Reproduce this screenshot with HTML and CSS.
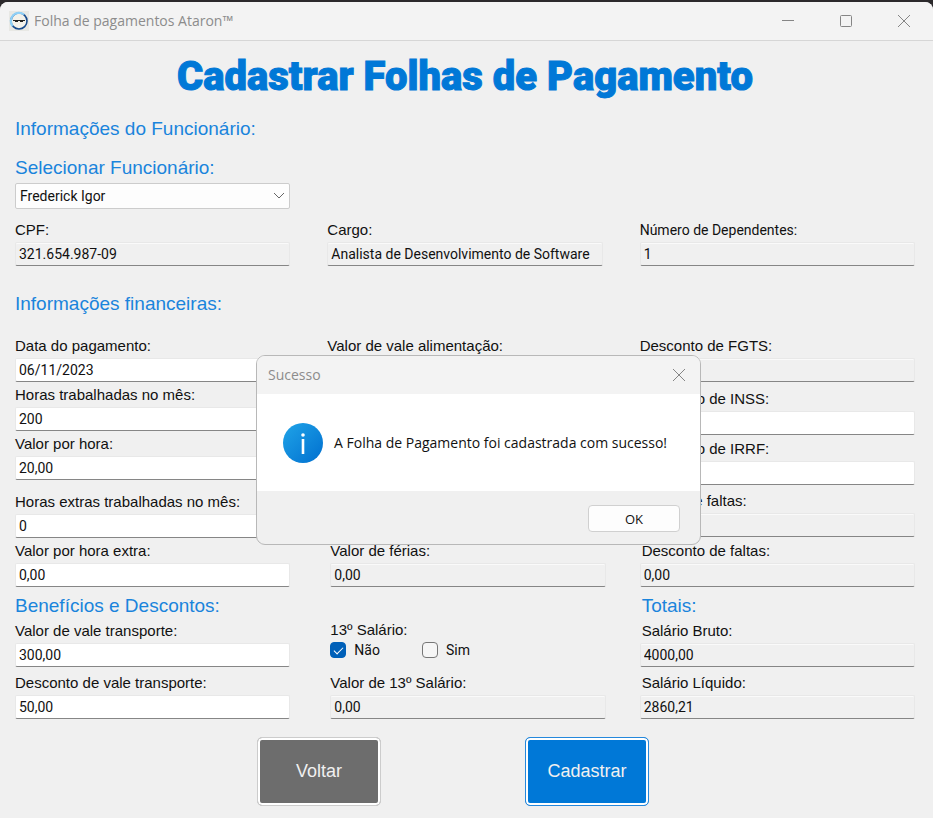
FILE: index.html
```html
<!DOCTYPE html>
<html lang="pt-BR">
<head>
<meta charset="utf-8">
<title>Folha de pagamentos Ataron™</title>
<link rel="stylesheet" href="styles.css">
</head>
<body>
<div class="window">
  <header class="titlebar">
    <svg class="app-icon" viewBox="0 0 20 20" aria-hidden="true">
      <rect width="20" height="20" fill="#e8e8e4"/>
      <circle cx="10" cy="10" r="8" fill="#f3f1ea" stroke="#164a8c" stroke-width="1.600"/>
      <path d="M3.500 15A8.200 8.200 0 0 1 15 3.500" fill="none" stroke="#8fd0f7" stroke-width="2.200"/>
      <path d="M4 9.500h12M6 10.500h3M11 10.500h3" stroke="#222"/>
    </svg>
    <span class="app-title">Folha de pagamentos Ataron™</span>
    <div class="caption-buttons">
      <button type="button" aria-label="Minimizar"><svg viewBox="0 0 14 14"><path d="M1 6.500h12"/></svg></button>
      <button type="button" aria-label="Maximizar"><svg viewBox="0 0 14 14"><rect x="1.500" y="1.500" width="11" height="11" rx="1"/></svg></button>
      <button type="button" aria-label="Fechar"><svg viewBox="0 0 14 14"><path d="M1 1l12 12M13 1L1 13"/></svg></button>
    </div>
  </header>

  <main class="content">
    <h1>Cadastrar Folhas de Pagamento</h1>
    <form>
      <h2>Informações do Funcionário:</h2>
      <div class="columns picker">
        <div class="column">
          <label class="heading-label" for="funcionario">Selecionar Funcionário:</label>
          <div class="select-wrap">
            <select id="funcionario"><option>Frederick Igor</option></select>
            <svg viewBox="0 0 12 8" aria-hidden="true"><path d="M1 1l5 5 5-5"/></svg>
          </div>
        </div>
      </div>
      <div class="columns employee">
        <div class="field"><label for="cpf">CPF:</label><input id="cpf" value="321.654.987-09" readonly></div>
        <div class="field"><label for="cargo">Cargo:</label><input id="cargo" value="Analista de Desenvolvimento de Software" readonly></div>
        <div class="field small-label"><label for="dependentes">Número de Dependentes:</label><input id="dependentes" value="1" readonly></div>
      </div>

      <h2 class="finance-title">Informações financeiras:</h2>
      <div class="columns finance">
        <div class="column">
          <div class="field"><label for="data">Data do pagamento:</label><input id="data" value="06/11/2023"></div>
          <div class="field"><label for="horas">Horas trabalhadas no mês:</label><input id="horas" value="200"></div>
          <div class="field"><label for="valor-hora">Valor por hora:</label><input id="valor-hora" value="20,00"></div>
          <div class="field far"><label for="extras">Horas extras trabalhadas no mês:</label><input id="extras" value="0"></div>
          <div class="field"><label for="valor-extra">Valor por hora extra:</label><input id="valor-extra" value="0,00"></div>
        </div>
        <div class="column spread">
          <div class="field"><label for="alimentacao">Valor de vale alimentação:</label><input id="alimentacao"></div>
          <div class="field inset"><label for="ferias">Valor de férias:</label><input id="ferias" value="0,00" readonly></div>
        </div>
        <div class="column spread">
          <div class="field"><label for="fgts">Desconto de FGTS:</label><input id="fgts" readonly></div>
          <div class="field near indented"><label for="inss">Desconto de INSS:</label><input id="inss"></div>
          <div class="field indented"><label for="irrf">Desconto de IRRF:</label><input id="irrf"></div>
          <div class="field near indented"><label for="horas-faltas">Horas de faltas:</label><input id="horas-faltas" readonly></div>
          <div class="field indented"><label for="faltas">Desconto de faltas:</label><input id="faltas" value="0,00" readonly></div>
        </div>
      </div>

      <div class="columns totals">
        <section class="column">
          <h2>Benefícios e Descontos:</h2>
          <div class="field"><label for="transporte">Valor de vale transporte:</label><input id="transporte" value="300,00"></div>
          <div class="field near"><label for="desc-transporte">Desconto de vale transporte:</label><input id="desc-transporte" value="50,00"></div>
        </section>
        <section class="column bottom inset">
          <fieldset>
            <legend>13º Salário:</legend>
            <div class="checks">
              <label><input type="checkbox" checked>Não</label>
              <label><input type="checkbox">Sim</label>
            </div>
          </fieldset>
          <div class="field"><label for="decimo">Valor de 13º Salário:</label><input id="decimo" value="0,00" readonly></div>
        </section>
        <section class="column indented">
          <h2>Totais:</h2>
          <div class="field"><label for="bruto">Salário Bruto:</label><input id="bruto" value="4000,00" readonly></div>
          <div class="field near"><label for="liquido">Salário Líquido:</label><input id="liquido" value="2860,21" readonly></div>
        </section>
      </div>

      <div class="actions">
        <button type="button" class="action back">Voltar</button>
        <button type="button" class="action submit">Cadastrar</button>
      </div>
    </form>
  </main>

  <div class="dialog" role="dialog" aria-labelledby="dialog-title">
    <div class="dialog-bar">
      <span id="dialog-title">Sucesso</span>
      <button type="button" aria-label="Fechar mensagem"><svg viewBox="0 0 14 14"><path d="M1 1l12 12M13 1L1 13"/></svg></button>
    </div>
    <div class="dialog-body">
      <svg viewBox="0 0 40 40" aria-hidden="true">
        <defs><linearGradient id="info" x1="0" y1="0" x2="1" y2="1"><stop offset="0" stop-color="#20a4e8"/><stop offset="1" stop-color="#006fcf"/></linearGradient></defs>
        <circle cx="20" cy="20" r="20" fill="url(#info)"/>
        <circle cx="20" cy="12" r="1.800" fill="#fff"/>
        <path d="M20 16v15" stroke="#fff" stroke-width="2.600"/>
      </svg>
      <p>A Folha de Pagamento foi cadastrada com sucesso!</p>
    </div>
    <div class="dialog-footer"><button type="button">OK</button></div>
  </div>
</div>
</body>
</html>
```
FILE: styles.css
```css
* {
  box-sizing: border-box;
}

body {
  margin: 0;
  padding-top: 2px;
  background: #2b292b;
  color: #111;
  font-family: "Liberation Sans", Arial, sans-serif;
}

button,
input,
select {
  font: inherit;
  color: inherit;
}

.window {
  position: relative;
  min-height: calc(100vh - 2px);
  background: #f0f0f0;
  border-radius: 8px 8px 0 0;
  overflow: hidden;
}

.titlebar {
  display: flex;
  align-items: center;
  height: 39px;
  padding-left: 9px;
  background: #f3f3f3;
  border-bottom: 1px solid #d6d6d6;
  color: #8c8c8c;
  font-family: "Open Sans", "Noto Sans", sans-serif;
  font-size: 14px;
  line-height: 18px;
}

.app-icon {
  width: 20px;
  height: 20px;
  margin-right: 5px;
}

.caption-buttons {
  display: flex;
  margin-left: auto;
}

.caption-buttons button,
.dialog-bar button {
  display: grid;
  place-items: center;
  padding: 0;
  border: 0;
  background: none;
}

.caption-buttons button {
  width: 58px;
  height: 38px;
}

.caption-buttons svg,
.dialog-bar svg {
  width: 14px;
  height: 14px;
  fill: none;
  stroke: #858585;
}

.content {
  padding: 9px 18px 12px 15px;
}

h1 {
  margin: 0;
  color: #0078d7;
  font-family: Impact, Roboto, "Liberation Sans", sans-serif;
  font-size: 40px;
  font-weight: 900;
  line-height: 54px;
  text-align: center;
  white-space: nowrap;
  -webkit-text-stroke: 1px #0078d7;
}

h2,
.heading-label {
  display: block;
  margin: 0;
  color: #1a84dc;
  font-size: 19px;
  font-weight: 400;
  line-height: 24px;
}

form > h2 {
  margin-top: 13px;
}

.columns {
  display: grid;
  grid-template-columns: repeat(3, minmax(0, 1fr));
  column-gap: 37px;
}

.column {
  display: flex;
  flex-direction: column;
  gap: 1px;
}

.picker {
  margin-top: 15px;
}

.picker .column {
  gap: 3px;
}

.select-wrap {
  position: relative;
}

select {
  display: block;
  width: 100%;
  height: 26px;
  padding: 0 4px;
  border: 1px solid #ccc;
  border-radius: 2px;
  background: #fdfdfd;
  appearance: none;
  font-family: Roboto, "Liberation Sans", sans-serif;
  font-size: 14px;
}

.select-wrap svg {
  position: absolute;
  right: 5px;
  top: 9px;
  width: 12px;
  height: 8px;
  fill: none;
  stroke: #666;
  pointer-events: none;
}

.employee {
  margin-top: 9px;
}

.field label,
legend {
  display: block;
  padding: 0;
  font-size: 15px;
  line-height: 24px;
}

.small-label label {
  font-family: Roboto, "Liberation Sans", sans-serif;
  font-size: 14px;
}

.field input {
  display: block;
  width: 100%;
  height: 24px;
  padding: 0 3px;
  border: 1px solid #e8e8e8;
  border-bottom-color: #868686;
  border-radius: 2px;
  background: #fff;
  font-family: Roboto, "Liberation Sans", sans-serif;
  font-size: 14px;
}

.field input:read-only {
  background: #f0f0f0;
  box-shadow: inset 0 1px #fafafa;
}

form > .finance-title {
  margin-top: 26px;
}

.finance {
  margin-top: 18px;
}

.far {
  margin-top: 9px;
}

.near {
  margin-top: 3px;
}

.inset {
  margin-left: 3px;
  margin-right: -3px;
}

.indented label,
.indented h2 {
  padding-left: 2px;
}

.spread {
  justify-content: space-between;
}

.totals {
  margin-top: 7px;
}

.bottom {
  justify-content: flex-end;
}

fieldset {
  margin: 0;
  padding: 0 0 12px;
  border: 0;
}

.checks {
  display: flex;
  gap: 42px;
  font-family: Roboto, "Liberation Sans", sans-serif;
  font-size: 14px;
  line-height: 16px;
}

.checks label {
  display: flex;
  align-items: center;
  gap: 8px;
}

.checks input {
  display: grid;
  place-items: center;
  width: 16px;
  height: 16px;
  margin: 0;
  border: 1px solid #777;
  border-radius: 4px;
  background: #f6f6f6;
  appearance: none;
}

.checks input:checked {
  border-color: #0060b8;
  background: #0060b8;
}

.checks input:checked::before {
  content: "";
  width: 8px;
  height: 4px;
  border: solid #fff;
  border-width: 0 0 1px 1px;
  transform: translateY(-1px) rotate(-45deg);
}

.actions {
  display: flex;
  justify-content: center;
  gap: 144px;
  padding-right: 24px;
  margin-top: 18px;
}

.action {
  width: 124px;
  height: 69px;
  border: 1px solid #ccc;
  border-radius: 5px;
  box-shadow: inset 0 0 0 2px #fff;
  color: #f0f0f0;
  font-size: 18px;
}

.back {
  background: #6d6d6d;
}

.submit {
  border-color: #2588dc;
  background: #0078d7;
}

.dialog {
  position: absolute;
  left: 256px;
  top: 353px;
  width: 445px;
  border: 1px solid #b8b8b8;
  border-radius: 9px;
  background: #f0f0f0;
  overflow: hidden;
  font-family: "Open Sans", "Noto Sans", sans-serif;
}

.dialog-bar {
  display: flex;
  align-items: center;
  justify-content: space-between;
  height: 38px;
  padding: 0 14px 0 11px;
  background: #f3f3f3;
  color: #8c8c8c;
  font-size: 14px;
  line-height: 18px;
}

.dialog-body {
  display: flex;
  align-items: center;
  gap: 11px;
  height: 97px;
  padding: 0 26px;
  background: #fff;
}

.dialog-body svg {
  flex: none;
  width: 40px;
  height: 40px;
}

.dialog-body p {
  margin: 0;
  font-size: 14px;
  white-space: nowrap;
}

.dialog-footer {
  display: flex;
  justify-content: flex-end;
  padding: 14px 20px 12px;
}

.dialog-footer button {
  width: 92px;
  height: 27px;
  padding: 0;
  border: 1px solid #d0d0d0;
  border-radius: 4px;
  background: #fdfdfd;
  font-size: 13px;
  font-weight: 500;
}
```
